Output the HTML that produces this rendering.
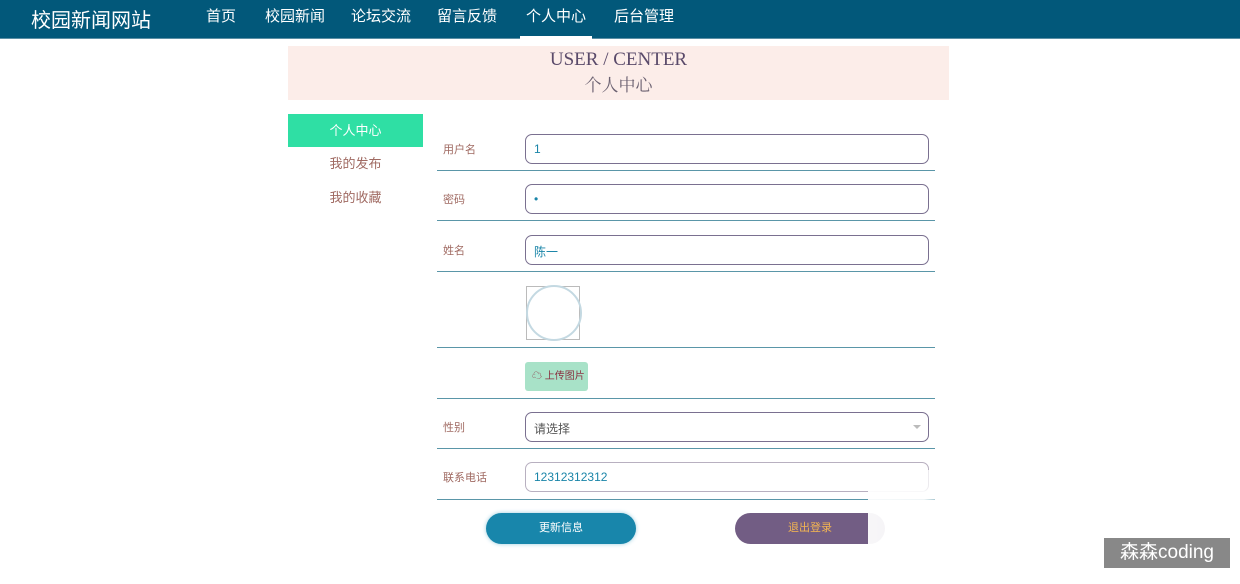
<!DOCTYPE html>
<html><head><meta charset="utf-8"><style>
*{margin:0;padding:0;box-sizing:border-box}
body{width:1240px;height:584px;overflow:hidden;background:#fff;font-family:"Liberation Sans","Noto Sans CJK SC",sans-serif;position:relative}
.nav{height:39px;background:#02587a;border-bottom:1px solid #5b8fa5;position:relative}
.logo{position:absolute;left:31px;top:4px;color:#fff;font-size:20px}
.nav a{position:absolute;top:5px;color:#fff;font-size:15px}
.act{position:absolute;left:520px;top:36px;width:72px;height:3px;background:#fff}
.ban{position:absolute;left:288px;top:46px;width:661px;height:54px;background:#fcede9;text-align:center;color:#5a4a6a;font-family:"Liberation Serif","Noto Serif CJK SC",serif}
.ban .e{font-size:19px;margin-top:3px}
.ban .c{font-size:17px;color:#6a6070}
.side{position:absolute;left:288px;width:135px;height:33px;line-height:33px;text-align:center;font-size:13px;color:#a06a62}
.row{position:absolute;left:437px;width:498px;border-bottom:1px solid #5a96a8}
.lab{position:absolute;left:443px;font-size:11px;color:#a06a62}
.inp{position:absolute;left:525px;width:404px;height:30px;border:1px solid #7a7090;border-radius:7px;font-size:12px;color:#1a85a8;padding:7px 8px}
.btn{position:absolute;top:513px;height:31px;border-radius:16px;font-size:11px;text-align:center;line-height:31px}
</style></head><body>
<div class="nav"><div class="logo">校园新闻网站</div>
<a style="left:206px">首页</a><a style="left:265px">校园新闻</a><a style="left:351px">论坛交流</a><a style="left:437px">留言反馈</a><a style="left:526px">个人中心</a><a style="left:614px">后台管理</a>
<div class="act"></div></div>
<div class="ban"><div class="e">USER / CENTER</div><div class="c">个人中心</div></div>
<div class="side" style="top:114px;background:#2fdfa4;color:#fff">个人中心</div>
<div class="side" style="top:147px">我的发布</div>
<div class="side" style="top:181px">我的收藏</div>
<div class="row" style="top:134px;height:37px"></div>
<div class="row" style="top:171px;height:50px"></div>
<div class="row" style="top:221px;height:51px"></div>
<div class="row" style="top:272px;height:76px"></div>
<div class="row" style="top:348px;height:51px"></div>
<div class="row" style="top:399px;height:50px"></div>
<div class="row" style="top:449px;height:51px"></div>
<div class="lab" style="top:141px">用户名</div>
<div class="lab" style="top:191px">密码</div>
<div class="lab" style="top:242px">姓名</div>
<div class="lab" style="top:419px">性别</div>
<div class="lab" style="top:469px">联系电话</div>
<div class="inp" style="top:134px">1</div>
<div class="inp" style="top:184px">•</div>
<div class="inp" style="top:235px">陈一</div>
<div style="position:absolute;left:526px;top:286px;width:54px;height:54px;border:1px solid #bbb"></div>
<div style="position:absolute;left:526px;top:285px;width:56px;height:56px;border:2px solid #c4d9e2;border-radius:50%"></div>
<div style="position:absolute;left:525px;top:362px;width:63px;height:29px;background:#a8e2c8;border-radius:3px;font-size:10px;color:#8a3040;line-height:29px;padding-left:7px">☁ 上传图片</div>
<div class="inp" style="top:412px;color:#555">请选择<span style="position:absolute;right:7px;top:12px;border:4px solid transparent;border-top-color:#bbb"></span></div>
<div class="inp" style="top:462px;border-color:#b8b0c0">12312312312</div>
<div class="btn" style="left:486px;width:150px;background:#1886ab;color:#fff;box-shadow:0 0 4px #9cd">更新信息</div>
<div class="btn" style="left:735px;width:150px;background:#725d84;color:#f3b552">退出登录</div>
<div style="position:absolute;left:868px;top:470px;width:80px;height:114px;background:linear-gradient(90deg,rgba(255,255,255,.95),rgba(255,255,255,.9) 70%,rgba(255,255,255,0))"></div>
<div style="position:absolute;left:1104px;top:538px;width:126px;height:30px;background:#888;color:#fff;font-size:19px;line-height:30px;text-align:center">森森coding</div>
</body></html>
